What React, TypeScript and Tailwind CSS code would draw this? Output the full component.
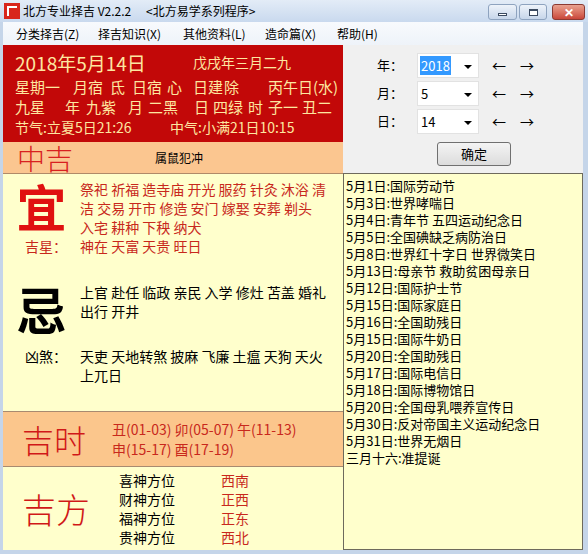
const YI_LINES = [
  "祭祀 祈福 造寺庙 开光 服药 针灸 沐浴 清",
  "洁 交易 开市 修造 安门 嫁娶 安葬 剃头",
  "入宅 耕种 下秧 纳犬",
];

const JI_LINES = ["上官 赴任 临政 亲民 入学 修灶 苫盖 婚礼", "出行 开井"];
const XIONG_LINES = ["天吏 天地转煞 披麻 飞廉 土瘟 天狗 天火", "上兀日"];

const FESTIVALS = [
  "5月1日:国际劳动节",
  "5月3日:世界哮喘日",
  "5月4日:青年节 五四运动纪念日",
  "5月5日:全国碘缺乏病防治日",
  "5月8日:世界红十字日 世界微笑日",
  "5月13日:母亲节 救助贫困母亲日",
  "5月12日:国际护士节",
  "5月15日:国际家庭日",
  "5月16日:全国助残日",
  "5月15日:国际牛奶日",
  "5月20日:全国助残日",
  "5月17日:国际电信日",
  "5月18日:国际博物馆日",
  "5月20日:全国母乳喂养宣传日",
  "5月30日:反对帝国主义运动纪念日",
  "5月31日:世界无烟日",
  "三月十六:准提诞",
];

const DIRECTIONS = [
  { label: "喜神方位", value: "西南" },
  { label: "财神方位", value: "正西" },
  { label: "福神方位", value: "正东" },
  { label: "贵神方位", value: "西北" },
];

const MENU: [string, number][] = [
  ["分类择吉(Z)", 82],
  ["择吉知识(X)", 85],
  ["其他资料(L)", 82],
  ["造命篇(X)", 72],
  ["帮助(H)", 60],
];

// [text, width] pairs so each cell lands where the original puts it
const ROW2: [string, number][] = [
  ["星期一", 58],
  ["月宿", 37],
  ["氐", 22],
  ["日宿", 35],
  ["心", 26],
  ["日建", 31],
  ["除", 44],
  ["丙午日(水)", 70],
];

const ROW3: [string, number][] = [
  ["九星", 50],
  ["年", 21],
  ["九紫", 42],
  ["月", 20],
  ["二黑", 46],
  ["日", 19],
  ["四绿", 35],
  ["时", 20],
  ["子一", 34],
  ["丑二", 32],
];

function TitleBar() {
  return (
    <div className="flex h-[22px] items-center bg-gradient-to-b from-[#e3ecf7] to-[#c9d9ee] pl-1">
      <div className="flex h-4 w-4 items-center justify-center bg-[#d8261c]">
        <div className="h-[10px] w-[10px] border-l-2 border-t-2 border-white" />
      </div>
      <div className="ml-[3px] flex text-[12px] text-black">
        <span className="w-[123px]">北方专业择吉 V2.2.2</span>
        <span>&lt;北方易学系列程序&gt;</span>
      </div>
      <div className="ml-auto mr-[3px] flex items-start gap-[2px] self-start pt-[4px]">
        <button className="flex h-[16px] w-[29px] items-center justify-center rounded-[3px] border border-[#8ea3bf] bg-gradient-to-b from-[#eef3fa] to-[#c7d6ea]">
          <span className="mt-[5px] h-[3px] w-[9px] border border-[#3b4a60] bg-white" />
        </button>
        <button className="flex h-[16px] w-[28px] items-center justify-center rounded-[3px] border border-[#8ea3bf] bg-gradient-to-b from-[#eef3fa] to-[#c7d6ea]">
          <span className="h-[7px] w-[9px] border border-[#3b4a60] border-t-2 bg-white" />
        </button>
        <button className="ml-[3px] flex h-[16px] w-[33px] items-center justify-center rounded-[3px] border border-[#8b3a32] bg-gradient-to-b from-[#e9a290] to-[#c9463a] text-[12px] font-bold leading-none text-white">
          ✕
        </button>
      </div>
    </div>
  );
}

function MenuBar() {
  return (
    <div className="flex h-[23px] items-center bg-gradient-to-b from-[#f8fafd] to-[#eef3f9] pl-[13px] text-[12px] text-black">
      {MENU.map(([t, w]) => (
        <span key={t} className="shrink-0" style={{ width: w }}>
          {t}
        </span>
      ))}
    </div>
  );
}

function CellRow({ cells }: { cells: [string, number][] }) {
  return (
    <div className="flex h-[20px] items-center whitespace-nowrap pl-[12px] text-[15px]">
      {cells.map(([t, w], i) => (
        <span key={i} className="shrink-0" style={{ width: w }}>
          {t}
        </span>
      ))}
    </div>
  );
}

function RedHeader() {
  return (
    <div className="flex h-[97px] flex-col bg-[#c20808] pt-[2px] text-[#fde7a0]">
      <div className="flex h-[30px] items-center pl-[12px]">
        <span className="w-[178px] text-[19px] leading-none">2018年5月14日</span>
        <span className="text-[14px]">戊戌年三月二九</span>
      </div>
      <CellRow cells={ROW2} />
      <CellRow cells={ROW3} />
      <div className="flex h-[20px] items-center pl-[12px] text-[14px]">
        <span className="w-[155px]">节气:立夏5日21:26</span>
        <span>中气:小满21日10:15</span>
      </div>
    </div>
  );
}

function LeftPanel() {
  return (
    <div className="flex w-[340px] shrink-0 flex-col">
      <RedHeader />
      <div className="flex h-[32px] items-center border-b border-[#b08a68] bg-[#fbc690]">
        <span className="w-[152px] pl-[14px] text-[28px] font-light leading-none text-[#d82020]">中吉</span>
        <span className="text-[12px] text-black">属鼠犯冲</span>
      </div>

      <div className="flex h-[237px] flex-col bg-[#ffffcc] pt-[6px]">
        <div className="flex">
          <div className="flex h-[57px] w-[77px] justify-center">
            <span className="h-[50px] text-[50px] font-bold leading-none text-[#e01010]">宜</span>
          </div>
          <div className="text-[14px] leading-[19px] text-[#c8281c]">
            {YI_LINES.map((l) => (
              <div key={l} className="whitespace-nowrap">
                {l}
              </div>
            ))}
          </div>
        </div>
        <div className="flex text-[14px] leading-[19px] text-[#c8281c]">
          <span className="w-[77px] pl-[22px]">吉星：</span>
          <span>神在 天富 天贵 旺日</span>
        </div>

        <div className="mt-[27px] flex">
          <div className="flex h-[50px] w-[77px] justify-center">
            <span className="h-[50px] text-[50px] font-bold leading-none text-black">忌</span>
          </div>
          <div className="text-[14px] leading-[19px] text-black">
            {JI_LINES.map((l) => (
              <div key={l} className="whitespace-nowrap">
                {l}
              </div>
            ))}
          </div>
        </div>
        <div className="mt-[14px] flex text-[14px] leading-[19px] text-black">
          <span className="w-[77px] pl-[22px]">凶煞：</span>
          <div>
            {XIONG_LINES.map((l) => (
              <div key={l} className="whitespace-nowrap">
                {l}
              </div>
            ))}
          </div>
        </div>
      </div>

      <div className="flex h-[56px] items-center border-y border-[#a88a70] bg-[#fbc68c]">
        <span className="w-[109px] pl-[19px] text-[32px] font-light leading-none text-[#d01818]">吉时</span>
        <div className="text-[14px] leading-[20px] text-[#c8281c]">
          <div>丑(01-03) 卯(05-07) 午(11-13)</div>
          <div>申(15-17) 酉(17-19)</div>
        </div>
      </div>

      <div className="flex flex-1 items-center bg-[#ffffcc]">
        <span className="w-[116px] pl-[19px] text-[34px] font-light leading-none text-[#d01818]">吉方</span>
        <div className="flex flex-col text-[14px] leading-[19px]">
          {DIRECTIONS.map((d) => (
            <div key={d.label} className="flex">
              <span className="w-[102px] text-black">{d.label}</span>
              <span className="text-[#c8281c]">{d.value}</span>
            </div>
          ))}
        </div>
      </div>
    </div>
  );
}

function DateSelect({ label, value, selected }: { label: string; value: string; selected?: boolean }) {
  return (
    <div className="flex h-[28px] items-center">
      <span className="w-[40px] pl-[34px] text-[13px] whitespace-nowrap">{label}</span>
      <div className="ml-[34px] flex h-[25px] w-[62px] items-center border border-[#e2e2e2] bg-white pl-[2px] pr-[6px]">
        <span
          className={
            selected
              ? "bg-[#3399ff] px-[1px] text-[13px] leading-[19px] text-white"
              : "px-[1px] text-[13px] leading-[19px] text-black"
          }
        >
          {value}
        </span>
        <span className="ml-auto mt-[4px] h-0 w-0 border-x-[4px] border-t-[4px] border-x-transparent border-t-black" />
      </div>
      <span className="ml-[13px] w-[28px] text-[14px]">←</span>
      <span className="text-[14px]">→</span>
    </div>
  );
}

function RightPanel() {
  return (
    <div className="flex flex-1 flex-col bg-[#f0f0f0]">
      <div className="flex h-[128px] flex-col pt-[6px]">
        <DateSelect label="年：" value="2018" selected />
        <DateSelect label="月：" value="5" />
        <DateSelect label="日：" value="14" />
        <button className="ml-[94px] mt-[7px] h-[24px] w-[74px] rounded-[3px] border border-[#707070] bg-gradient-to-b from-[#f4f4f4] to-[#dcdcdc] text-[13px] text-black">
          确定
        </button>
      </div>
      <div className="flex-1 border border-[#6e6a5c] bg-[#ffffcc] pl-[2px] pt-[3px]">
        {FESTIVALS.map((f, i) => (
          <div key={i} className="h-[17px] whitespace-nowrap text-[13px] leading-[17px] text-black">
            {f}
          </div>
        ))}
      </div>
    </div>
  );
}

export default function App() {
  return (
    <div className="flex h-[554px] w-[588px] flex-col overflow-hidden bg-[#c5d5e9] font-['Noto_Sans_CJK_SC','Liberation_Sans',sans-serif] text-black">
      <TitleBar />
      <div className="mb-[4px] ml-[3px] mr-[5px] flex flex-1 flex-col">
        <MenuBar />
        <div className="flex flex-1">
          <LeftPanel />
          <RightPanel />
        </div>
      </div>
    </div>
  );
}
